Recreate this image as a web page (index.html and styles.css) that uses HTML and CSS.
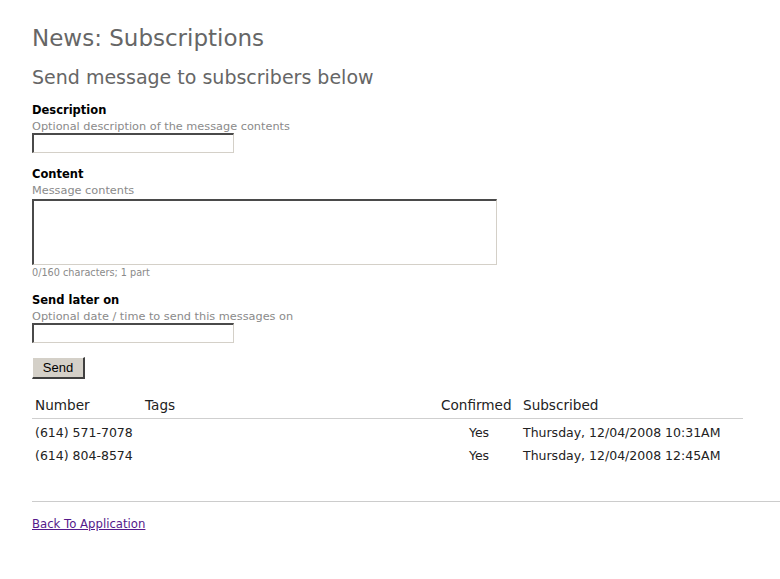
FILE: index.html
```html
<!DOCTYPE html>
<html>
<head>
<meta charset="utf-8">
<title>News: Subscriptions</title>
<link rel="stylesheet" href="styles.css">
</head>
<body>
<div class="page">
  <h1 class="title">News: Subscriptions</h1>
  <h2 class="subtitle">Send message to subscribers below</h2>
  <form class="form">
    <div class="field">
      <div class="label">Description</div>
      <div class="hint">Optional description of the message contents</div>
      <input class="text-input" type="text">
    </div>
    <div class="field">
      <div class="label">Content</div>
      <div class="hint">Message contents</div>
      <textarea class="text-area"></textarea>
      <div class="counter">0/160 characters; 1 part</div>
    </div>
    <div class="field">
      <div class="label">Send later on</div>
      <div class="hint">Optional date / time to send this messages on</div>
      <input class="text-input" type="text">
    </div>
    <button class="send-btn" type="button">Send</button>
  </form>
  <table class="subs">
    <thead>
      <tr>
        <th class="c-num">Number</th>
        <th class="c-tags">Tags</th>
        <th class="c-conf">Confirmed</th>
        <th class="c-date">Subscribed</th>
      </tr>
    </thead>
    <tbody>
      <tr>
        <td>(614) 571-7078</td>
        <td></td>
        <td class="yes">Yes</td>
        <td>Thursday, 12/04/2008 10:31AM</td>
      </tr>
      <tr>
        <td>(614) 804-8574</td>
        <td></td>
        <td class="yes">Yes</td>
        <td>Thursday, 12/04/2008 12:45AM</td>
      </tr>
    </tbody>
  </table>
  <hr class="rule">
  <a class="back" href="#">Back To Application</a>
</div>
</body>
</html>
```

FILE: styles.css
```css
html, body {
  margin: 0;
  padding: 0;
  background: #ffffff;
}

body {
  font-family: "DejaVu Sans", Verdana, sans-serif;
  color: #000;
}

.page {
  padding: 0 0 0 32px;
}

.title {
  margin: 24px 0 0;
  font-size: 23px;
  line-height: 28px;
  font-weight: normal;
  color: #666666;
}

.subtitle {
  margin: 13px 0 0;
  font-size: 19px;
  line-height: 24px;
  font-weight: normal;
  color: #666666;
}

.form {
  margin: 0;
}

.field {
  margin-top: 14px;
  display: flex;
  flex-direction: column;
  align-items: flex-start;
}

.label {
  font-size: 11.5px;
  line-height: 15px;
  font-weight: bold;
  color: #000;
}

.hint {
  padding-top: 2px;
  font-size: 11.3px;
  line-height: 13px;
  color: #8a8a8a;
}

.text-input,
.text-area {
  box-sizing: border-box;
  margin: 0;
  padding: 0;
  background: #fff;
  border-style: solid;
  border-width: 2px 1px 1px 2px;
  border-color: #4a4a4a #d4d0c8 #d4d0c8 #4a4a4a;
  outline: none;
  font-family: "DejaVu Sans", sans-serif;
}

.text-input {
  width: 202px;
  height: 20px;
}

.text-area {
  width: 465px;
  height: 66px;
  margin-top: 2px;
  resize: none;
}

.counter {
  margin-top: 2px;
  font-size: 9.7px;
  line-height: 12px;
  color: #8a8a8a;
}

.send-btn {
  margin-top: 14px;
  width: 53px;
  height: 22px;
  padding: 0;
  background: #d4d0c8;
  border-style: solid;
  border-width: 1px 2px 2px 1px;
  border-color: #ffffff #404040 #404040 #ffffff;
  font-family: "Liberation Sans", Arial, sans-serif;
  font-size: 13px;
  color: #000;
}

.subs {
  margin-top: 15px;
  width: 711px;
  border-collapse: collapse;
  table-layout: fixed;
}

.subs th {
  padding: 3px 3px 4px;
  font-size: 13.6px;
  line-height: 17px;
  font-weight: normal;
  text-align: left;
  color: #222;
  border-bottom: 1px solid #cfcfcf;
}

.c-num { width: 104px; }
.c-tags { width: 290px; }
.c-conf { width: 76px; }
.c-date { width: 217px; }

.subs td {
  padding: 6px 3px 2px;
  font-size: 12.5px;
  line-height: 15px;
  color: #222;
  white-space: nowrap;
}

.subs td.yes {
  text-align: center;
}

.rule {
  margin: 36px 0 0;
  border: 0;
  border-top: 1px solid #cccccc;
  height: 0;
}

.back {
  display: inline-block;
  margin-top: 15px;
  font-size: 11.7px;
  line-height: 14px;
  color: #551a8b;
  text-decoration: underline;
}
```
